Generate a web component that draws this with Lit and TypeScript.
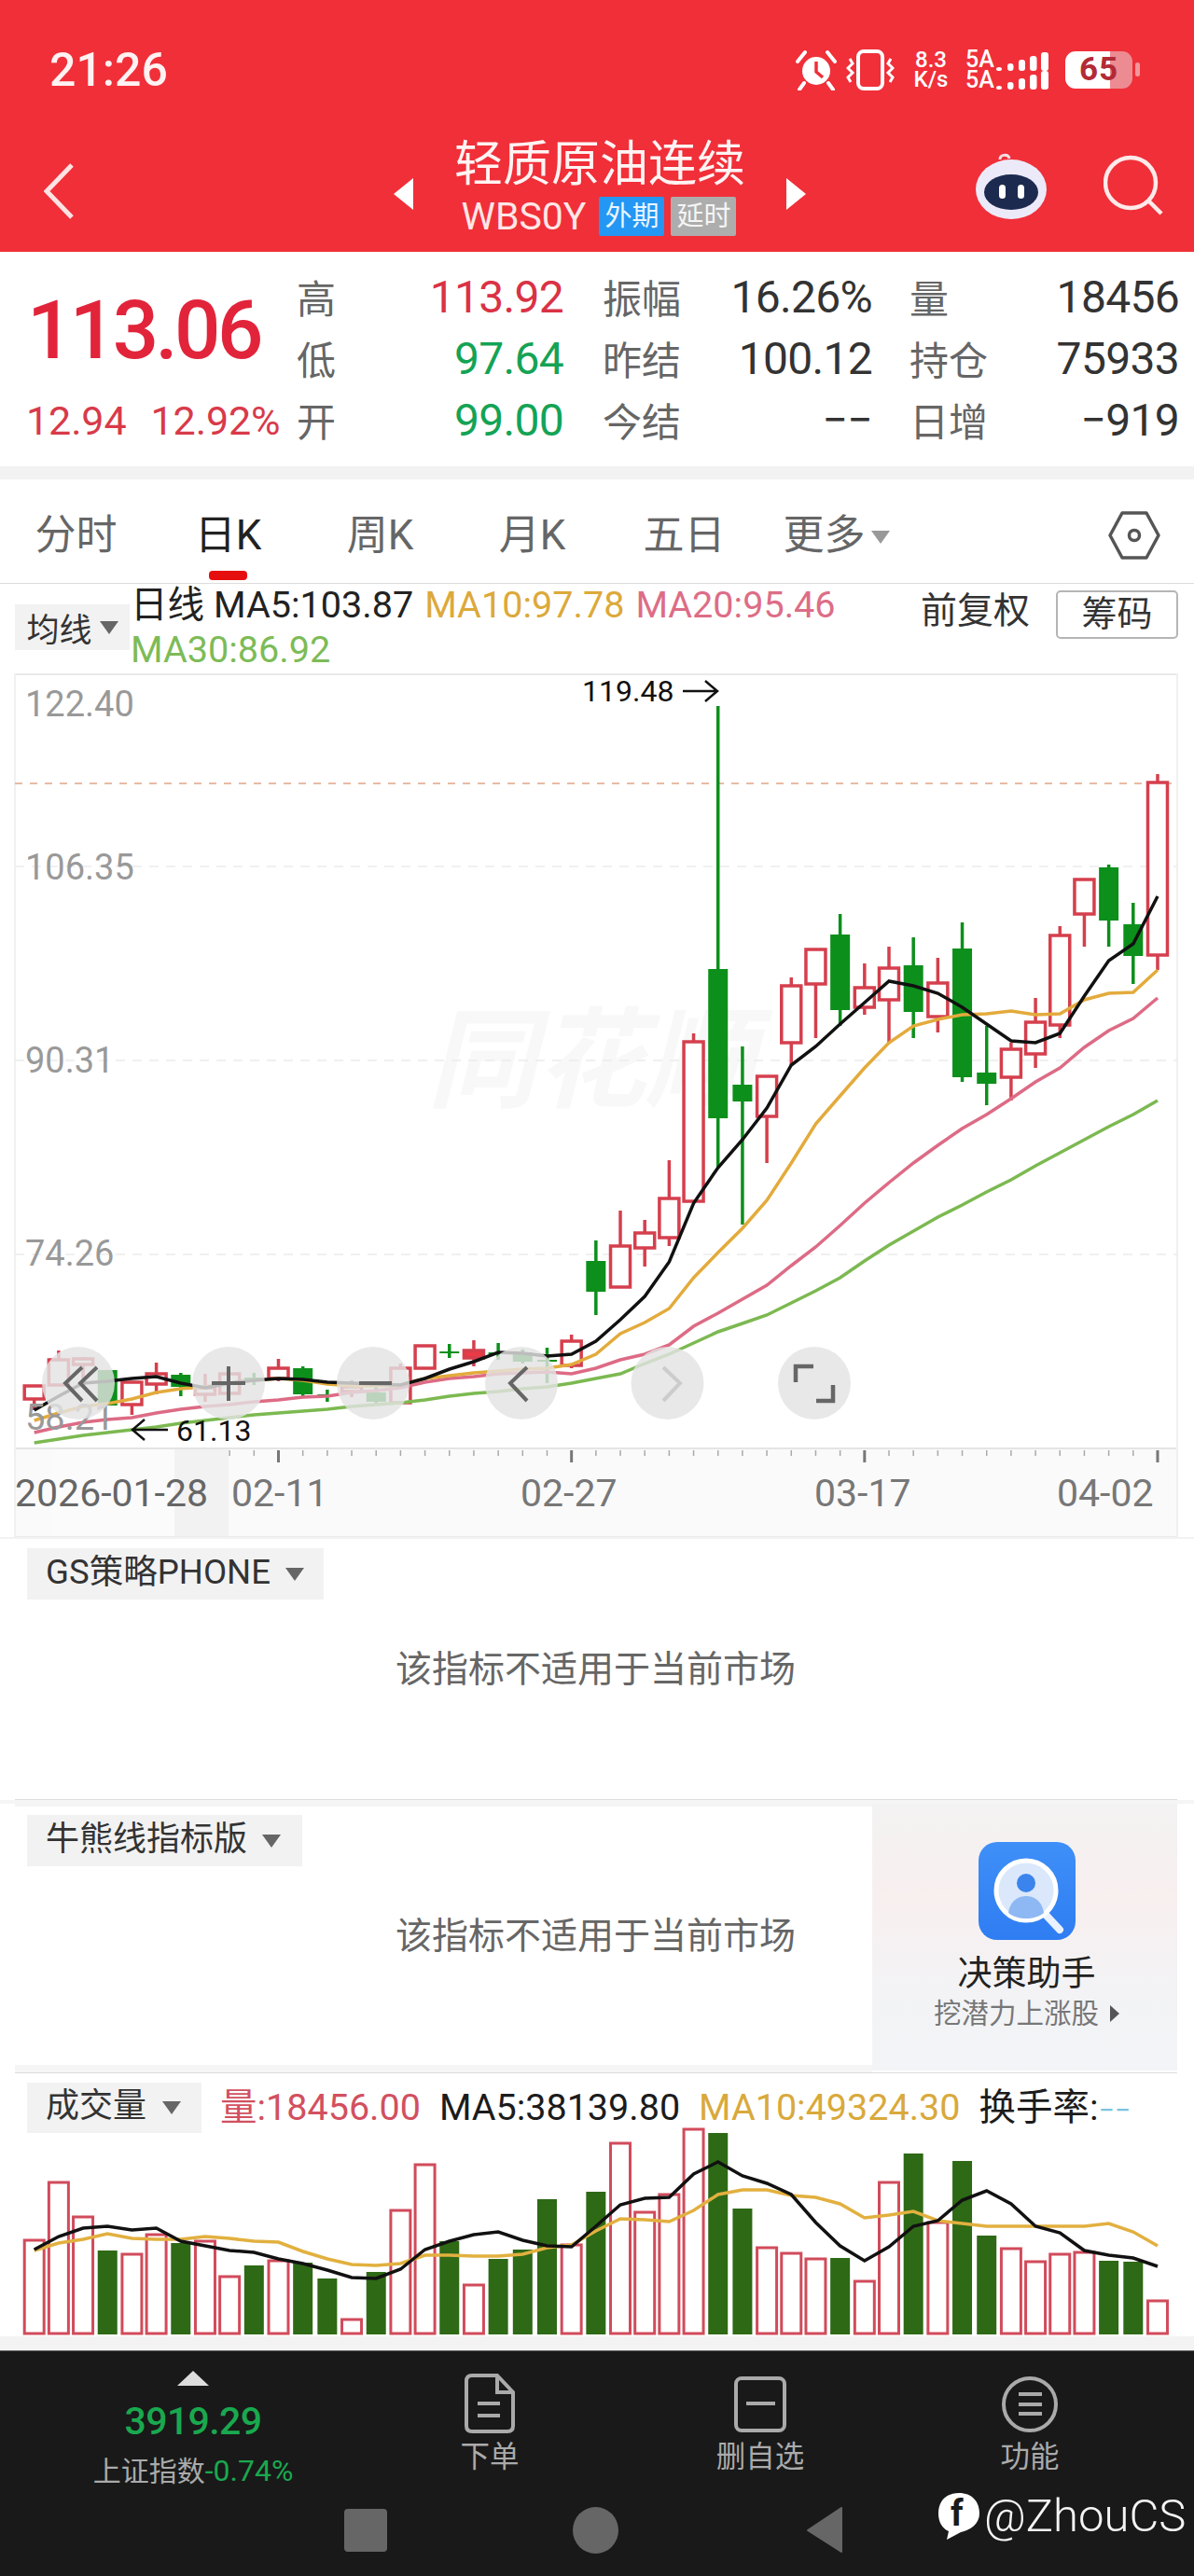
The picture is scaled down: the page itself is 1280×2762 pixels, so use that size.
import { LitElement, html, css, svg } from 'lit';
import { customElement } from 'lit/decorators.js';

// candles: [kind, bodyTop, bodyBottom, wickTop, wickBottom] in page pixels
type Candle = ['r' | 'g' | 'f', number, number, number, number];
const candles: Candle[] = [
  ['r', 1486, 1500, 1486, 1512], ['r', 1458, 1485, 1448, 1485], ['r', 1457, 1463, 1455, 1480],
  ['g', 1469, 1507, 1469, 1507], ['r', 1482, 1506, 1482, 1517], ['r', 1473, 1484, 1461, 1495],
  ['g', 1474, 1487, 1472, 1497], ['r', 1488, 1495, 1473, 1503], ['r', 1473, 1494, 1473, 1494],
  ['g', 1477, 1480, 1472, 1485], ['r', 1467, 1478, 1457, 1481], ['g', 1467, 1495, 1465, 1498],
  ['g', 1495, 1497, 1490, 1503], ['r', 1487, 1492, 1480, 1498], ['g', 1493, 1503, 1482, 1507],
  ['r', 1467, 1504, 1462, 1505], ['r', 1443, 1467, 1443, 1467], ['g', 1449, 1451, 1441, 1456],
  ['f', 1448, 1456, 1437, 1465], ['g', 1450, 1452, 1440, 1458], ['g', 1450, 1460, 1447, 1462],
  ['g', 1458, 1460, 1445, 1483], ['r', 1438, 1464, 1431, 1467], ['g', 1352, 1385, 1330, 1410],
  ['r', 1336, 1380, 1298, 1380], ['r', 1322, 1338, 1308, 1358], ['r', 1285, 1327, 1244, 1336],
  ['r', 1117, 1288, 1108, 1288], ['g', 1039, 1199, 757, 1252], ['g', 1163, 1181, 1122, 1313],
  ['r', 1154, 1197, 1154, 1247], ['r', 1057, 1118, 1048, 1142], ['r', 1018, 1055, 1018, 1113],
  ['g', 1002, 1083, 980, 1100], ['r', 1059, 1080, 1033, 1088], ['r', 1038, 1072, 1015, 1118],
  ['g', 1035, 1085, 1005, 1113], ['r', 1054, 1090, 1027, 1107], ['g', 1017, 1155, 989, 1160],
  ['g', 1150, 1162, 1100, 1185], ['r', 1125, 1155, 1118, 1180], ['r', 1096, 1130, 1070, 1145],
  ['r', 1003, 1099, 993, 1113], ['r', 943, 980, 943, 1015], ['g', 930, 987, 927, 1015],
  ['g', 991, 1025, 968, 1055], ['r', 839, 1024, 830, 1040],
];

const ma5 = [1512, 1497, 1483, 1481, 1478, 1476, 1483, 1488, 1483, 1480, 1478, 1479, 1482, 1483, 1484, 1485, 1478, 1468, 1460, 1450, 1451, 1454, 1452, 1438, 1415, 1390, 1353, 1290, 1252, 1222, 1188, 1142, 1122, 1098, 1075, 1052, 1057, 1065, 1080, 1098, 1116, 1118, 1108, 1068, 1030, 1012, 961];
const ma10 = [1523, 1515, 1508, 1505, 1500, 1493, 1489, 1487, 1483, 1480, 1478, 1480, 1484, 1486, 1486, 1485, 1478, 1475, 1472, 1470, 1468, 1467, 1463, 1452, 1430, 1418, 1403, 1370, 1343, 1317, 1287, 1247, 1205, 1175, 1145, 1118, 1100, 1093, 1088, 1087, 1084, 1088, 1087, 1072, 1065, 1064, 1040];
const ma20 = [1536, 1530, 1525, 1522, 1520, 1515, 1511, 1508, 1506, 1503, 1501, 1498, 1497, 1493, 1491, 1488, 1482, 1478, 1476, 1473, 1472, 1471, 1473, 1467, 1458, 1452, 1442, 1422, 1408, 1393, 1378, 1357, 1337, 1314, 1290, 1268, 1247, 1228, 1210, 1195, 1178, 1160, 1145, 1123, 1105, 1092, 1070];
const ma30 = [1547, 1543, 1539, 1536, 1533, 1530, 1526, 1523, 1520, 1517, 1515, 1513, 1511, 1508, 1506, 1504, 1501, 1497, 1494, 1492, 1489, 1487, 1483, 1478, 1473, 1462, 1452, 1440, 1428, 1419, 1410, 1397, 1384, 1370, 1352, 1335, 1320, 1305, 1292, 1278, 1265, 1250, 1236, 1222, 1208, 1195, 1180];

const volBars: ['r' | 'g', number][] = [
  ['r', 2402], ['r', 2340], ['r', 2377], ['g', 2413], ['r', 2417], ['r', 2396], ['g', 2405], ['r', 2403],
  ['r', 2441], ['g', 2429], ['r', 2424], ['g', 2426], ['g', 2443], ['r', 2487], ['g', 2436], ['r', 2370],
  ['r', 2321], ['g', 2403], ['r', 2450], ['g', 2422], ['g', 2412], ['g', 2358], ['r', 2407], ['g', 2350],
  ['r', 2298], ['r', 2372], ['r', 2353], ['r', 2283], ['g', 2287], ['g', 2368], ['r', 2410], ['r', 2416],
  ['r', 2422], ['g', 2421], ['r', 2446], ['r', 2340], ['g', 2309], ['r', 2383], ['g', 2317], ['g', 2397],
  ['r', 2411], ['r', 2425], ['r', 2417], ['r', 2415], ['g', 2424], ['g', 2425], ['r', 2467],
];
const volMa5 = [2412, 2398, 2389, 2387, 2391, 2389, 2403, 2408, 2413, 2415, 2422, 2427, 2434, 2442, 2443, 2433, 2412, 2403, 2396, 2393, 2402, 2408, 2409, 2387, 2364, 2357, 2356, 2331, 2318, 2333, 2341, 2353, 2383, 2408, 2424, 2409, 2387, 2381, 2359, 2349, 2363, 2387, 2394, 2413, 2418, 2421, 2430];
const volMa10 = [2413, 2405, 2401, 2395, 2400, 2401, 2401, 2398, 2400, 2403, 2404, 2414, 2422, 2428, 2429, 2427, 2418, 2418, 2419, 2419, 2417, 2410, 2407, 2392, 2379, 2380, 2382, 2370, 2353, 2348, 2348, 2354, 2356, 2363, 2378, 2375, 2371, 2381, 2384, 2387, 2387, 2387, 2387, 2387, 2384, 2393, 2408];

const cx = (i: number) => 36.7 + 26.18 * i;
const line = (ys: number[]) => ys.map((y, i) => `${cx(i).toFixed(1)},${y}`).join(' ');

const RED = '#d53f4d';
const GREEN = '#0c8f1b';

@customElement('app-root')
export class AppRoot extends LitElement {
  static styles = css`
    :host {
      display: block;
      width: 1280px;
      height: 2762px;
      overflow: hidden;
      background: #fff;
      font-family: Roboto, 'Noto Sans CJK SC', sans-serif;
      color: #333;
    }
    svg { display: block; }

    .header { height: 270px; background: #f02f39; color: #fff; }
    .status {
      height: 140px;
      padding: 10px 66px 0 53px;
      box-sizing: border-box;
      display: flex;
      align-items: center;
      justify-content: space-between;
    }
    .time { font-size: 50px; font-weight: 500; color: #fff2f2; }
    .status-right { display: flex; align-items: center; }
    .speed { font-size: 24px; line-height: 21px; font-weight: 500; text-align: center; width: 42px; margin: 0 16px 0 18px; }
    .sim { font-size: 25px; line-height: 22px; font-weight: 500; width: 32px; }
    .battery {
      position: relative;
      width: 72px;
      height: 40px;
      margin-left: 15px;
      border-radius: 11px;
      background: linear-gradient(90deg, #fff 67%, #ec8b91 67%);
      color: #b32a36;
      font-size: 35px;
      font-weight: 700;
      line-height: 40px;
      text-align: center;
      letter-spacing: 1px;
    }
    .battery::after {
      content: '';
      position: absolute;
      left: 75px;
      top: 12px;
      width: 5px;
      height: 15px;
      border-radius: 3px;
      background: #f3979c;
    }

    .nav {
      height: 130px;
      display: grid;
      grid-template-columns: 1fr auto 1fr;
      align-items: center;
      padding: 0 33px 0 47px;
      box-sizing: border-box;
    }
    .nav-title { display: flex; align-items: center; gap: 45px; margin-left: -8px; }
    .tri-l { border: solid transparent; border-width: 17px 21px 17px 0; border-right-color: #fff; margin-top: 6px; }
    .tri-r { border: solid transparent; border-width: 17px 0 17px 21px; border-left-color: #fff; margin-top: 6px; }
    .title-col { width: 310px; display: flex; flex-direction: column; align-items: center; margin-top: -9px; }
    .title { font-size: 52px; line-height: 60px; white-space: nowrap; color: #fff3f3; margin-top: -2px; }
    .sub { display: flex; align-items: center; margin-top: 4px; margin-left: -2px; font-size: 41px; line-height: 42px; color: #ffe6e6; white-space: nowrap; }
    .badge {
      width: 70px;
      height: 42px;
      line-height: 42px;
      text-align: center;
      font-size: 29px;
      margin-left: 14px;
      background: #2397f3;
      color: #eaf5ff;
      border-radius: 2px;
    }
    .badge.gray { background: #adadad; margin-left: 7px; color: #f5f5f5; }
    .nav-right { display: flex; justify-content: flex-end; align-items: center; gap: 60px; margin-top: -12px; }

    .quote {
      height: 230px;
      box-sizing: border-box;
      padding-top: 16px;
      display: grid;
      grid-template-columns: 318px 328px 329px 1fr;
      grid-auto-rows: 66px;
      align-items: center;
    }
    .price {
      grid-row: span 2;
      padding: 4px 0 0 29px;
      font-size: 87px;
      letter-spacing: -3.6px;
      font-weight: 500;
      color: #e2243b;
      line-height: 1;
      white-space: nowrap;
    }
    .change { display: flex; gap: 26px; padding-left: 28px; font-size: 43px; color: #d83a4a; white-space: nowrap; letter-spacing: -0.1px; }
    .cell { display: flex; justify-content: space-between; align-items: center; padding-right: 42px; }
    .cell.c3 { padding-right: 40px; }
    .cell.c4 { padding-right: 16px; }
    .lbl { font-size: 42px; color: #666; margin-top: -4px; }
    .val { font-size: 48px; color: #333; letter-spacing: -0.7px; margin-top: -2px; }
    .val.red { color: #da3245; }
    .val.green { color: #14a355; }

    .band { height: 14px; background: #f2f2f2; }

    .tabs {
      height: 111px;
      box-sizing: border-box;
      padding: 9px 36px 0 0;
      display: flex;
      align-items: center;
      justify-content: space-between;
    }
    .tab-list { display: grid; grid-template-columns: repeat(6, 163px); }
    .tab { position: relative; text-align: center; font-size: 44px; color: #666; line-height: 60px; white-space: nowrap; }
    .tab.on { color: #222; }
    .tab.on::after {
      content: '';
      position: absolute;
      left: 61px;
      top: 68px;
      width: 41px;
      height: 10px;
      border-radius: 4px;
      background: #e60f0f;
    }
    .caret { display: inline-block; width: 0; height: 0; border: solid transparent; border-width: 14px 10px 0; border-top-color: #999; margin-left: 6px; vertical-align: 6px; }
    .rule { height: 1px; background: #dcdcdc; }

    .ma-row { height: 96px; display: flex; padding: 0 17px 0 16px; box-sizing: border-box; position: relative; }
    .chip-ma {
      flex: none;
      width: 123px;
      height: 49px;
      margin-top: 22px;
      background: #f2f2f2;
      display: flex;
      align-items: center;
      justify-content: center;
      gap: 8px;
      font-size: 35px;
      color: #333;
    }
    .caret-d { width: 0; height: 0; border: solid transparent; border-width: 14px 10px 0; border-top-color: #666; }
    .legend { flex: none; width: 832px; margin-left: 1px; display: flex; flex-wrap: wrap; column-gap: 12px; font-size: 39.6px; line-height: 46px; white-space: nowrap; }
    .legend .k { color: #222; }
    .legend .o { color: #dca93a; }
    .legend .p { color: #dd6d87; }
    .legend .g { color: #7dbb57; width: 100%; }
    .adj { margin-left: 15px; margin-top: 6px; font-size: 39px; line-height: 47px; color: #333; white-space: nowrap; }
    .chips-btn {
      margin-left: 28px;
      margin-top: 7px;
      width: 131px;
      height: 52px;
      box-sizing: border-box;
      border: 2px solid #b5b5b5;
      border-radius: 5px;
      text-align: center;
      font-size: 38px;
      line-height: 47px;
      color: #333;
      flex: none;
    }

    .ax { font-size: 38px; fill: #999; }
    .pk { font-size: 32px; fill: #111; }
    .date { font-size: 41px; fill: #777; }
    .wm { font-size: 117px; font-weight: 700; fill: #f8f8f8; font-style: italic; }

    .gap2 { height: 2px; background: #f2f2f2; }
    .panel { margin: 0 18px 0 16px; background: #fff; }
    .panel-top { height: 279px; border-bottom: 1px solid #dcdcdc; overflow: hidden; }
    .chip {
      display: inline-flex;
      align-items: center;
      height: 55px;
      margin: 10px 0 0 13px;
      padding: 0 23px 0 20px;
      gap: 16px;
      background: #f2f2f2;
      font-size: 36px;
      line-height: 50px;
      color: #333;
      white-space: nowrap;
    }
    .chip span:first-child { margin-top: -4px; }
    .chip.gs { font-size: 36.6px; padding-right: 21px; }
    .msg { margin: 50px 0 0 408px; font-size: 39px; line-height: 50px; color: #666; white-space: nowrap; }
    .sep { height: 4px; background: #f5f5f5; }
    .panel-row { height: 288px; margin: 0 18px 0 16px; display: grid; grid-template-columns: 919px 327px; }
    .panel-left { background: #f5f5f5; padding: 3px 0 8px; box-sizing: border-box; }
    .panel-body { height: 100%; background: #fff; overflow: hidden; }
    .panel-body .chip { margin-top: 9px; }
    .promo {
      height: 286px;
      background: linear-gradient(180deg, #f3f2f2 0%, #f8efef 35%, #f3f3f5 70%, #f2f4f7 100%);
      display: flex;
      flex-direction: column;
      align-items: center;
      box-sizing: border-box;
      padding-top: 41px;
      padding-left: 4px;
    }
    .promo-title { margin-top: 10px; font-size: 37px; line-height: 54px; color: #222; white-space: nowrap; }
    .promo-sub { display: flex; align-items: center; gap: 12px; font-size: 29.5px; line-height: 30px; color: #777; white-space: nowrap; }
    .tri-s { border: solid transparent; border-width: 9px 0 9px 10px; border-left-color: #555; }

    .vol { border-top: 1px solid #dcdcdc; margin: 0 18px 0 16px; height: 282px; position: relative; }
    .vol-head { height: 57px; display: flex; align-items: flex-start; white-space: nowrap; }
    .vol-head .chip { height: 54px; margin-top: 10px; padding: 0 22px 0 20px; gap: 17px; flex: none; }
    .vol-legend { display: flex; margin: 13px 0 0 20px; font-size: 39.5px; line-height: 48px; gap: 20px; }
    .vol-legend .a { color: #d2505f; }
    .vol-legend .b { color: #1c1c1c; }
    .vol-legend .c { color: #d9a93c; }
    .blue { color: #7cc3e0; font-size: 30px; }
    .vol-svg { margin-left: -16px; }
    .strip { height: 15px; background: #f3f3f3; }

    .bottom { height: 242px; background: #191919; border-top: 1px solid #666; box-sizing: border-box; position: relative; }
    .bar { height: 166px; display: grid; grid-template-columns: 414px 222px 358px 220px; }
    .item { display: flex; flex-direction: column; align-items: center; color: #aaa; white-space: nowrap; }
    .item.idx { padding-top: 21px; }
    .item.act { padding-top: 24px; }
    .up { border: solid transparent; border-width: 0 17px 16px; border-bottom-color: #ddd; }
    .idx-num { margin-top: 11px; font-size: 41px; line-height: 54px; font-weight: 500; letter-spacing: -0.6px; color: #1aa84f; }
    .idx-sub { margin-top: 6px; font-size: 30px; line-height: 40px; }
    .idx-sub b { font-weight: 400; color: #1aa84f; font-size: 32px; }
    .item-label { margin-top: 5px; font-size: 31.5px; line-height: 42px; }
    .sys { display: flex; align-items: center; height: 51px; padding-left: 369px; }
    .sq { width: 46px; height: 46px; border-radius: 4px; background: #666; margin-right: 199px; }
    .dot { width: 49px; height: 50px; border-radius: 50%; background: #666; margin-right: 201px; }
    .mark {
      position: absolute;
      left: 1006px;
      top: 147px;
      display: flex;
      align-items: center;
      gap: 5px;
      font-size: 49px;
      line-height: 60px;
      color: #f4f4f4;
      font-weight: 300;
    }
    .fb { font-size: 38px; font-weight: 700; fill: #1a1a1a; }
  `;

  private renderCandle(c: Candle, i: number) {
    const [kind, top, bottom, wt, wb] = c;
    const x = cx(i);
    if (kind === 'g') {
      return svg`
        <line x1=${x} x2=${x} y1=${wt} y2=${wb} stroke=${GREEN} stroke-width="3.5" />
        <rect x=${x - 10.5} y=${top} width="21" height=${bottom - top} fill=${GREEN} />`;
    }
    return svg`
      <line x1=${x} x2=${x} y1=${wt} y2=${wb} stroke=${RED} stroke-width="3.5" />
      <rect x=${x - 10.5} y=${top} width="21" height=${bottom - top} fill=${kind === 'f' ? '#e93a45' : '#fff'} stroke=${RED} stroke-width="3.5" />`;
  }

  private renderChart() {
    const ticks = Array.from({ length: 39 }, (_, k) => k + 8);
    const major = [10, 22, 34, 46];
    return html`
      <svg width="1280" height="926" viewBox="0 722 1280 926">
        <rect x="16" y="1554" width="1246" height="94" fill="#fafafa" />
        <rect x="55" y="1554" width="132" height="94" fill="#fbfbfb" />
        <rect x="187" y="1554" width="58" height="94" fill="#f2f2f2" />
        <line x1="16" x2="1262" y1="723" y2="723" stroke="#e9e9e9" stroke-width="2" />
        <line x1="16" x2="1262" y1="1553" y2="1553" stroke="#e4e4e4" stroke-width="2" />
        <line x1="16" x2="16" y1="722" y2="1648" stroke="#f0f0f0" stroke-width="2" />
        <line x1="1262" x2="1262" y1="722" y2="1648" stroke="#f0f0f0" stroke-width="2" />

        <text class="wm" x="458" y="1178">同花顺</text>
        ${[929, 1137, 1345].map(
          (y) => svg`<line x1="16" x2="1262" y1=${y} y2=${y} stroke="#ececec" stroke-width="1.5" stroke-dasharray="10 8" />`,
        )}
        <line x1="16" x2="1262" y1="840" y2="840" stroke="#e8bba5" stroke-width="2" stroke-dasharray="8 8" />

        ${candles.map((c, i) => this.renderCandle(c, i))}

        <polyline points=${line(ma30)} fill="none" stroke="#7cb951" stroke-width="3.5" />
        <polyline points=${line(ma20)} fill="none" stroke="#dd6b85" stroke-width="3.5" />
        <polyline points=${line(ma10)} fill="none" stroke="#e3ab3c" stroke-width="3.5" />
        <polyline points=${line(ma5)} fill="none" stroke="#111" stroke-width="3.5" />

        <text class="ax" x="27" y="768">122.40</text>
        <text class="ax" x="27" y="943">106.35</text>
        <text class="ax" x="27" y="1150">90.31</text>
        <text class="ax" x="27" y="1357">74.26</text>
        <text class="ax" x="27" y="1533">58.21</text>

        <text class="pk" x="624" y="752">119.48</text>
        <path d="M732 741H768M756 730L769 741L756 752" fill="none" stroke="#111" stroke-width="2.5" />
        <text class="pk" x="189" y="1545">61.13</text>
        <path d="M180 1533H143M155 1522L142 1533L155 1544" fill="none" stroke="#111" stroke-width="2.5" />

        ${[84, 245, 400, 559, 715.5, 873].map(
          (x) => svg`<circle cx=${x} cy="1483" r="39" fill="#e3e3e3" fill-opacity="0.82" />`,
        )}
        <g fill="none" stroke="#666" stroke-width="4">
          <path d="M88 1466L70 1483L88 1502M104 1466L86 1483L104 1502" />
          <path d="M245 1465V1502M227 1483H263" />
          <path d="M385 1483H420" />
          <path d="M565 1466L547 1483L565 1502" />
          <path d="M711 1466L729 1483L711 1502" stroke="#ccc" />
          <path d="M853 1482V1465H872M875 1502H893V1485" stroke-width="4.5" />
        </g>

        ${ticks.map((i) =>
          major.includes(i)
            ? svg`<line x1=${cx(i)} x2=${cx(i)} y1="1555" y2="1568" stroke="#777" stroke-width="3" />`
            : svg`<line x1=${cx(i)} x2=${cx(i)} y1="1555" y2="1561" stroke="#aaa" stroke-width="1.5" />`,
        )}
        <text class="date" x="16" y="1615" style="fill:#666">2026-01-28</text>
        <text class="date" x="248" y="1615">02-11</text>
        <text class="date" x="558" y="1615">02-27</text>
        <text class="date" x="873" y="1615">03-17</text>
        <text class="date" x="1133" y="1615">04-02</text>
        <line x1="16" x2="1262" y1="1648" y2="1648" stroke="#ececec" stroke-width="2" />
      </svg>
    `;
  }

  private renderVolume() {
    return html`
      <svg class="vol-svg" width="1280" height="225" viewBox="0 2280 1280 225">
        ${volBars.map(([kind, top], i) =>
          kind === 'g'
            ? svg`<rect x=${cx(i) - 10.5} y=${top} width="21" height=${2503 - top} fill="#2e6916" />`
            : svg`<rect x=${cx(i) - 10.5} y=${top} width="21" height=${2502 - top} fill="#fff" stroke="#d14b5b" stroke-width="3" />`,
        )}
        <polyline points=${line(volMa10)} fill="none" stroke="#e2b03f" stroke-width="3.5" />
        <polyline points=${line(volMa5)} fill="none" stroke="#111" stroke-width="3.5" />
      </svg>
    `;
  }

  private renderStatusIcons() {
    return html`
      <svg width="46" height="44" viewBox="0 0 46 44" style="margin-right:9px">
        <circle cx="23" cy="23" r="15" fill="#fff" />
        <path d="M23 13V24L30 30" fill="none" stroke="#f02f39" stroke-width="3.5" />
        <path d="M3 13L11 3M43 13L35 3M10 36L5 43M36 36L41 43" stroke="#fff" stroke-width="4" stroke-linecap="round" />
      </svg>
      <svg width="52" height="44" viewBox="0 0 52 44">
        <rect x="13" y="2" width="26" height="40" rx="6" fill="none" stroke="#fff" stroke-width="4" />
        <path d="M4 10L7 15L2 20L7 25L2 30L5 35M48 10L45 15L50 20L45 25L50 30L47 35" fill="none" stroke="#fff" stroke-width="3" />
      </svg>
      <div class="speed">8.3<br />K/s</div>
      <div class="sim">5A<br />5A</div>
      <svg width="60" height="42" viewBox="0 0 60 42">
        ${[0, 1, 2, 3, 4].map(
          (k) => svg`
            <rect x=${1 + k * 12} y=${18 - k * 4} width=${6 + k * 0.5} height=${4 + k * 4} rx="3" fill="#fff" />
            <rect x=${1 + k * 12} y=${38 - k * 4} width=${6 + k * 0.5} height=${4 + k * 4} rx="3" fill="#fff" />`,
        )}
      </svg>
      <div class="battery">65</div>
    `;
  }

  render() {
    return html`
      <div class="header">
        <div class="status">
          <div class="time">21:26</div>
          <div class="status-right">${this.renderStatusIcons()}</div>
        </div>
        <div class="nav">
          <svg width="32" height="60" viewBox="0 0 32 60">
            <path d="M30 2L3 30L30 58" fill="none" stroke="#ffe3e3" stroke-width="5" />
          </svg>
          <div class="nav-title">
            <div class="tri-l"></div>
            <div class="title-col">
              <div class="title">轻质原油连续</div>
              <div class="sub">
                WBS0Y
                <span class="badge">外期</span>
                <span class="badge gray">延时</span>
              </div>
            </div>
            <div class="tri-r"></div>
          </div>
          <div class="nav-right">
            <svg width="78" height="74" viewBox="0 0 78 74">
              <path d="M27 9C27 3 36 3 37 8" fill="none" stroke="#f3dfe6" stroke-width="3" />
              <ellipse cx="39" cy="41" rx="38" ry="32" fill="#eceaf8" />
              <ellipse cx="39" cy="44" rx="29" ry="19" fill="#1d2a50" />
              <rect x="26" y="36" width="7" height="15" rx="3.5" fill="#fff" />
              <rect x="46" y="36" width="7" height="15" rx="3.5" fill="#fff" />
            </svg>
            <svg width="64" height="66" viewBox="0 0 64 66">
              <circle cx="29" cy="30" r="27" fill="none" stroke="#ffeaea" stroke-width="4.5" />
              <path d="M49 50L62 63" stroke="#ffeaea" stroke-width="4.5" />
            </svg>
          </div>
        </div>
      </div>

      <div class="quote">
        <div class="price">113.06</div>
        <div class="cell"><span class="lbl">高</span><span class="val red">113.92</span></div>
        <div class="cell c3"><span class="lbl">振幅</span><span class="val">16.26%</span></div>
        <div class="cell c4"><span class="lbl">量</span><span class="val">18456</span></div>
        <div class="cell"><span class="lbl">低</span><span class="val green">97.64</span></div>
        <div class="cell c3"><span class="lbl">昨结</span><span class="val">100.12</span></div>
        <div class="cell c4"><span class="lbl">持仓</span><span class="val">75933</span></div>
        <div class="change"><span>12.94</span><span>12.92%</span></div>
        <div class="cell"><span class="lbl">开</span><span class="val green">99.00</span></div>
        <div class="cell c3"><span class="lbl">今结</span><span class="val">−−</span></div>
        <div class="cell c4"><span class="lbl">日增</span><span class="val">−919</span></div>
      </div>
      <div class="band"></div>

      <div class="tabs">
        <div class="tab-list">
          <div class="tab">分时</div>
          <div class="tab on">日K</div>
          <div class="tab">周K</div>
          <div class="tab">月K</div>
          <div class="tab">五日</div>
          <div class="tab">更多<span class="caret"></span></div>
        </div>
        <svg width="56" height="52" viewBox="0 0 56 52">
          <path d="M15 2H41L54 26L41 50H15L2 26Z" fill="none" stroke="#555" stroke-width="3.5" stroke-linejoin="round" />
          <circle cx="28" cy="26" r="5.5" fill="none" stroke="#555" stroke-width="3.5" />
        </svg>
      </div>
      <div class="rule"></div>

      <div class="ma-row">
        <div class="chip-ma">均线<span class="caret-d"></span></div>
        <div class="legend">
          <span class="k">日线 MA5:103.87</span>
          <span class="o">MA10:97.78</span>
          <span class="p">MA20:95.46</span>
          <span class="g">MA30:86.92</span>
        </div>
        <div class="adj">前复权</div>
        <div class="chips-btn">筹码</div>
      </div>

      ${this.renderChart()}
      <div class="gap2"></div>

      <div class="panel panel-top">
        <div class="chip gs"><span>GS策略PHONE</span><span class="caret-d"></span></div>
        <div class="msg">该指标不适用于当前市场</div>
      </div>
      <div class="sep"></div>
      <div class="panel-row">
        <div class="panel-left">
          <div class="panel-body">
            <div class="chip"><span>牛熊线指标版</span><span class="caret-d"></span></div>
            <div class="msg">该指标不适用于当前市场</div>
          </div>
        </div>
        <div class="promo">
          <svg width="104" height="105" viewBox="0 0 104 105">
            <defs>
              <linearGradient id="pg" x1="0" y1="0" x2="0" y2="1">
                <stop offset="0" stop-color="#3f8ff8" />
                <stop offset="1" stop-color="#2f7df2" />
              </linearGradient>
            </defs>
            <rect width="104" height="105" rx="20" fill="url(#pg)" />
            <path d="M72 78L87 94" stroke="#eaf2ff" stroke-width="8" stroke-linecap="round" />
            <circle cx="51" cy="52" r="32" fill="#dbe8fb" stroke="#fff" stroke-width="5" />
            <circle cx="51" cy="44" r="10" fill="#3b84ee" />
            <path d="M32 76C34 62 44 58 51 58C58 58 68 62 70 76C60 84 42 84 32 76Z" fill="#8db8f3" />
          </svg>
          <div class="promo-title">决策助手</div>
          <div class="promo-sub">挖潜力上涨股<span class="tri-s"></span></div>
        </div>
      </div>

      <div class="vol">
        <div class="vol-head">
          <div class="chip"><span>成交量</span><span class="caret-d"></span></div>
          <div class="vol-legend">
            <span class="a">量:18456.00</span>
            <span class="b">MA5:38139.80</span>
            <span class="c">MA10:49324.30</span>
            <span class="b">换手率:<span class="blue">−−</span></span>
          </div>
        </div>
        ${this.renderVolume()}
      </div>
      <div class="strip"></div>

      <div class="bottom">
        <div class="bar">
          <div class="item idx">
            <div class="up"></div>
            <div class="idx-num">3919.29</div>
            <div class="idx-sub">上证指数<b>-0.74%</b></div>
          </div>
          <div class="item act">
            <svg width="54" height="64" viewBox="0 0 54 64">
              <path d="M8 2H35L52 20V56Q52 62 46 62H8Q2 62 2 56V8Q2 2 8 2ZM35 2V20H52" fill="none" stroke="#aaa" stroke-width="4" />
              <path d="M14 32H38M14 45H38" stroke="#aaa" stroke-width="4" />
            </svg>
            <div class="item-label">下单</div>
          </div>
          <div class="item act">
            <svg width="56" height="64" viewBox="0 0 56 64" style="margin-top:2px;margin-bottom:-2px">
              <rect x="2" y="3" width="52" height="56" rx="6" fill="none" stroke="#aaa" stroke-width="4" />
              <path d="M13 30H44" stroke="#aaa" stroke-width="4" />
            </svg>
            <div class="item-label">删自选</div>
          </div>
          <div class="item act">
            <svg width="60" height="64" viewBox="0 0 60 64" style="margin-top:2px;margin-bottom:-2px">
              <circle cx="30" cy="31" r="28" fill="none" stroke="#aaa" stroke-width="4" />
              <path d="M18 20H43M18 31H43M18 41H43" stroke="#aaa" stroke-width="4" />
            </svg>
            <div class="item-label">功能</div>
          </div>
        </div>
        <div class="sys">
          <div class="sq"></div>
          <div class="dot"></div>
          <svg width="40" height="51" viewBox="0 0 40 51">
            <path d="M38 2V49L2 26Z" fill="#666" stroke="#666" stroke-width="2" stroke-linejoin="round" />
          </svg>
        </div>
        <div class="mark">
          <svg width="44" height="50" viewBox="0 0 44 50">
            <path d="M22 0C36 0 44 9 44 22C44 33 34 40 24 42L9 50L11 41C4 38 0 31 0 22C0 9 8 0 22 0Z" fill="#fff" />
            <text class="fb" x="13" y="35">f</text>
          </svg>
          <span>@ZhouCS</span>
        </div>
      </div>
    `;
  }
}
